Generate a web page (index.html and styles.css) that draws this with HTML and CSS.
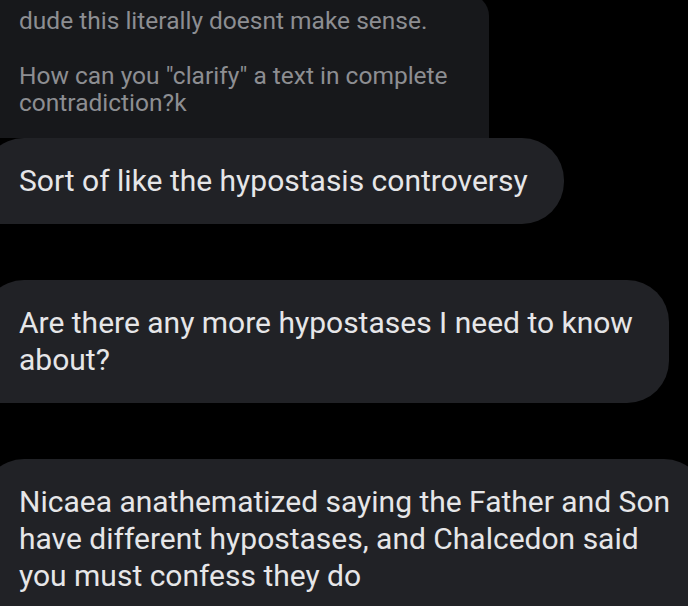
FILE: index.html
```html
<!DOCTYPE html>
<html lang="en">
<head>
<meta charset="utf-8">
<title>Chat</title>
<link rel="stylesheet" href="styles.css">
</head>
<body>
<main class="thread">
  <div class="reply">
    <div class="quote">
      <p>dude this literally doesnt make sense.</p>
      <p>How can you "clarify" a text in complete<br>contradiction?k</p>
    </div>
    <div class="bubble">Sort of like the hypostasis controversy</div>
  </div>
  <div class="bubble">Are there any more hypostases I need to know<br>about?</div>
  <div class="bubble">Nicaea anathematized saying the Father and Son<br>have different hypostases, and Chalcedon said<br>you must confess they do</div>
</main>
</body>
</html>
```

FILE: styles.css
```css
html, body {
  margin: 0;
  padding: 0;
  background: #000;
  overflow: hidden;
}

body {
  width: 688px;
  height: 606px;
  font-family: Roboto, "Liberation Sans", sans-serif;
}

.thread {
  display: flex;
  flex-direction: column;
  align-items: flex-start;
  gap: 56px;
  margin-top: -6px;
  margin-left: -18px;
}

.reply {
  display: flex;
  flex-direction: column;
  align-items: flex-start;
}

.quote {
  width: max-content;
  background: #17181b;
  color: #8d8e92;
  font-size: 24.5px;
  line-height: 27px;
  padding: 13px 41px 22px 37px;
  border-radius: 0 22px 0 0;
}

.quote p {
  margin: 0;
}

.quote p + p {
  margin-top: 28px;
}

.bubble {
  width: max-content;
  background: #212226;
  color: #e6e6e8;
  font-size: 30px;
  line-height: 37px;
  padding: 24px 36px 25px 37px;
  border-radius: 42px 42px 42px 6px;
}
```
